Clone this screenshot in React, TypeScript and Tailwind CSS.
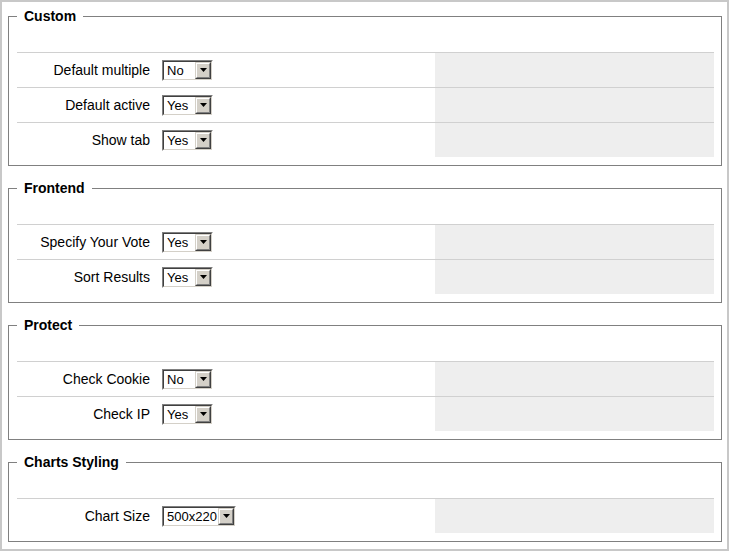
import React from 'react';

type Row = { label: string; value: string; wide?: boolean };
type Group = { title: string; rows: Row[] };

const groups: Group[] = [
  {
    title: 'Custom',
    rows: [
      { label: 'Default multiple', value: 'No' },
      { label: 'Default active', value: 'Yes' },
      { label: 'Show tab', value: 'Yes' },
    ],
  },
  {
    title: 'Frontend',
    rows: [
      { label: 'Specify Your Vote', value: 'Yes' },
      { label: 'Sort Results', value: 'Yes' },
    ],
  },
  {
    title: 'Protect',
    rows: [
      { label: 'Check Cookie', value: 'No' },
      { label: 'Check IP', value: 'Yes' },
    ],
  },
  {
    title: 'Charts Styling',
    rows: [{ label: 'Chart Size', value: '500x220', wide: true }],
  },
];

const ClassicSelect: React.FC<{ value: string; wide?: boolean }> = ({ value, wide }) => {
  return (
    <div
      className={`${wide ? 'w-[74px]' : 'w-[51px]'} h-[21px] border border-t-[#808080] border-l-[#808080] border-b-white border-r-white`}
    >
      <div className="h-full w-full flex items-stretch bg-white border border-t-[#404040] border-l-[#404040] border-b-[#d4d0c8] border-r-[#d4d0c8]">
        <span className="flex-1 pl-[3px] text-[13px] leading-[17px] text-black overflow-hidden whitespace-nowrap">
          {value}
        </span>
        <div className="w-[16px] border border-t-[#d4d0c8] border-l-[#d4d0c8] border-b-[#404040] border-r-[#404040]">
          <div className="h-full w-full bg-[#d4d0c8] flex items-center justify-center border border-t-white border-l-white border-b-[#808080] border-r-[#808080]">
            <svg width="7" height="4" viewBox="0 0 7 4">
              <polygon points="0,0 7,0 3.5,4" fill="#000" />
            </svg>
          </div>
        </div>
      </div>
    </div>
  );
};

export default function App() {
  return (
    <div
      className="w-[729px] h-[551px] bg-white border-2 border-[#c8c8c8] pt-[6px] pl-[6px] pr-[5px] overflow-hidden"
      style={{ fontFamily: '"Liberation Sans", Arial, sans-serif' }}
    >
      {groups.map((g) => (
        <fieldset
          key={g.title}
          className="border border-[#808080] pl-[8px] pr-[7px] pb-[8px] mb-[14px]"
        >
          <legend className="ml-0 px-[7px] text-[14px] leading-[17px] font-bold text-black">
            {g.title}
          </legend>
          <div className="pt-[27px]">
            {g.rows.map((r) => (
              <div key={r.label} className="flex border-t border-[#d0d0d0] h-[35px]">
                <div className="w-[138px] pr-[5px] pt-[1px] flex items-center justify-end text-[14px] text-black whitespace-nowrap">
                  {r.label}
                </div>
                <div className="w-[280px] pl-[7px] flex items-center">
                  <ClassicSelect value={r.value} wide={r.wide} />
                </div>
                <div className="flex-1 bg-[#eeeeee]" />
              </div>
            ))}
          </div>
        </fieldset>
      ))}
    </div>
  );
}
